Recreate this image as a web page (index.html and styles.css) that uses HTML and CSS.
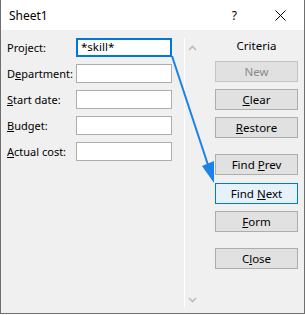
FILE: index.html
```html
<!DOCTYPE html>
<html lang="en">

<head>
  <meta charset="UTF-8" />
  <title>Sheet1</title>
  <link rel="stylesheet" href="styles.css">
</head>

<body>
  <div class="dialog">
    <div class="titlebar">
      <span class="title">Sheet1</span>
      <span class="help">?</span>
      <svg class="close" width="11" height="11" viewBox="0 0 11 11">
        <path d="M0.5 0.5 L10.5 10.5 M10.5 0.5 L0.5 10.5" stroke="#000" stroke-width="1" />
      </svg>
    </div>

    <div class="body">
      <div class="fields">
        <div class="row">
          <label>Pro<u>j</u>ect:</label>
          <div class="input active">*skill*</div>
        </div>
        <div class="row">
          <label>D<u>e</u>partment:</label>
          <div class="input"></div>
        </div>
        <div class="row">
          <label><u>S</u>tart date:</label>
          <div class="input"></div>
        </div>
        <div class="row">
          <label><u>B</u>udget:</label>
          <div class="input"></div>
        </div>
        <div class="row">
          <label><u>A</u>ctual cost:</label>
          <div class="input"></div>
        </div>
      </div>

      <div class="scrollbar">
        <svg width="9" height="6" viewBox="0 0 9 6">
          <path d="M1 5 L4.5 1.5 L8 5" fill="none" stroke="#bcbcbc" stroke-width="1.6" />
        </svg>
        <svg width="9" height="6" viewBox="0 0 9 6">
          <path d="M1 1 L4.5 4.5 L8 1" fill="none" stroke="#bcbcbc" stroke-width="1.6" />
        </svg>
      </div>

      <div class="buttons">
        <div class="criteria">Criteria</div>
        <div class="btn disabled">New</div>
        <div class="btn"><u>C</u>lear</div>
        <div class="btn"><u>R</u>estore</div>
        <div class="btn group">Find <u>P</u>rev</div>
        <div class="btn focus">Find <u>N</u>ext</div>
        <div class="btn"><u>F</u>orm</div>
        <div class="btn group">C<u>l</u>ose</div>
      </div>
    </div>

    <svg class="arrow" width="305" height="315" viewBox="0 0 305 315">
      <line x1="172" y1="56" x2="209" y2="168" stroke="#1a82e8" stroke-width="2" />
      <polygon points="214,183 202,166 214,161" fill="#1a82e8" />
    </svg>
  </div>
</body>

</html>
```

FILE: styles.css
```css
* {
  box-sizing: border-box;
  margin: 0;
  padding: 0;
}

body {
  width: 305px;
  height: 315px;
  background: #ffffff;
  font-family: "Noto Sans", "Open Sans", sans-serif;
  font-size: 11px;
  color: #000;
}

.dialog {
  position: relative;
  width: 305px;
  height: 314px;
  border: 1px solid #6f6f6f;
  border-top: none;
  display: flex;
  flex-direction: column;
  background: #f0f0f0;
}

.titlebar {
  height: 30px;
  background: #fff;
  display: flex;
  align-items: center;
  padding-left: 8px;
}

.title {
  flex: 1;
  font-size: 12px;
}

.help {
  font-size: 12px;
  margin-right: 38px;
}

.close {
  margin-right: 18px;
}

.body {
  flex: 1;
  display: flex;
}

.fields {
  width: 183px;
  padding: 8px 0 0 6px;
  display: flex;
  flex-direction: column;
  gap: 7px;
}

.row {
  display: flex;
  align-items: center;
  height: 19px;
}

.row label {
  width: 69px;
  white-space: nowrap;
}

.input {
  width: 96px;
  height: 19px;
  background: #fff;
  border: 1px solid #adadad;
  padding: 0 4px;
  line-height: 17px;
}

.input.active {
  border: 2px solid #0078d7;
  line-height: 14px;
  padding-left: 3px;
  font-size: 11.5px;
}

.scrollbar {
  width: 31px;
  margin: 8px 0 6px;
  border-left: 1px solid #ffffff;
  display: flex;
  flex-direction: column;
  justify-content: space-between;
  align-items: flex-start;
  padding: 7px 0 4px 3px;
}

.buttons {
  width: 83px;
  padding-top: 7px;
  display: flex;
  flex-direction: column;
  gap: 7px;
  font-size: 11.5px;
}

.criteria {
  text-align: center;
  height: 17px;
  line-height: 17px;
}

.btn {
  height: 21px;
  background: #e1e1e1;
  border: 1px solid #adadad;
  text-align: center;
  line-height: 19px;
}

.btn.disabled {
  color: #8a8a8a;
  border-color: #c4c4c4;
}

.btn.focus {
  background: #e5f1fb;
  border-color: #0078d7;
  margin-top: 1px;
}

.btn.group {
  margin-top: 9px;
}

.arrow {
  position: absolute;
  left: -1px;
  top: 0;
  pointer-events: none;
}
```
